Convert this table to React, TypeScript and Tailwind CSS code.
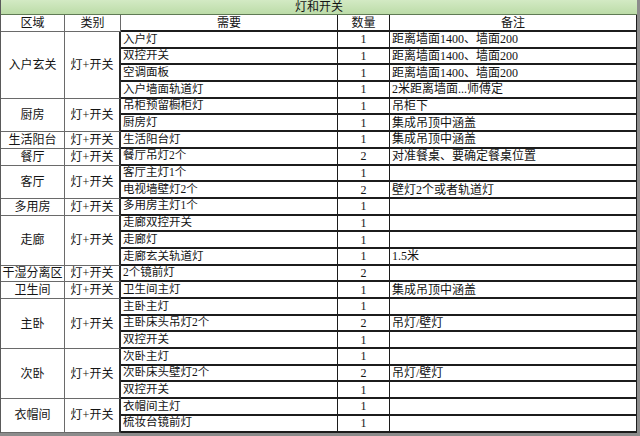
import React from "react";

type Item = { need: string; qty: number; note?: string };
type Group = { area: string; items: Item[] };

const wall = "距离墙面1400、墙面200";
const ceiling = "集成吊顶中涵盖";

const groups: Group[] = [
  {
    area: "入户玄关",
    items: [
      { need: "入户灯", qty: 1, note: wall },
      { need: "双控开关", qty: 1, note: wall },
      { need: "空调面板", qty: 1, note: wall },
      { need: "入户墙面轨道灯", qty: 1, note: "2米距离墙面...师傅定" },
    ],
  },
  {
    area: "厨房",
    items: [
      { need: "吊柜预留橱柜灯", qty: 1, note: "吊柜下" },
      { need: "厨房灯", qty: 1, note: ceiling },
    ],
  },
  { area: "生活阳台", items: [{ need: "生活阳台灯", qty: 1, note: ceiling }] },
  { area: "餐厅", items: [{ need: "餐厅吊灯2个", qty: 2, note: "对准餐桌、要确定餐桌位置" }] },
  {
    area: "客厅",
    items: [
      { need: "客厅主灯1个", qty: 1 },
      { need: "电视墙壁灯2个", qty: 2, note: "壁灯2个或者轨道灯" },
    ],
  },
  { area: "多用房", items: [{ need: "多用房主灯1个", qty: 1 }] },
  {
    area: "走廊",
    items: [
      { need: "走廊双控开关", qty: 1 },
      { need: "走廊灯", qty: 1 },
      { need: "走廊玄关轨道灯", qty: 1, note: "1.5米" },
    ],
  },
  { area: "干湿分离区", items: [{ need: "2个镜前灯", qty: 2 }] },
  { area: "卫生间", items: [{ need: "卫生间主灯", qty: 1, note: ceiling }] },
  {
    area: "主卧",
    items: [
      { need: "主卧主灯", qty: 1 },
      { need: "主卧床头吊灯2个", qty: 2, note: "吊灯/壁灯" },
      { need: "双控开关", qty: 1 },
    ],
  },
  {
    area: "次卧",
    items: [
      { need: "次卧主灯", qty: 1 },
      { need: "次卧床头壁灯2个", qty: 2, note: "吊灯/壁灯" },
      { need: "双控开关", qty: 1 },
    ],
  },
  {
    area: "衣帽间",
    items: [
      { need: "衣帽间主灯", qty: 1 },
      { need: "梳妆台镜前灯", qty: 1 },
    ],
  },
];

const spans: Record<number, string> = {
  1: "row-span-1",
  2: "row-span-2",
  3: "row-span-3",
  4: "row-span-4",
};

const font = { fontFamily: '"Liberation Serif", "Noto Sans CJK SC", serif' };

const leftCell = "flex items-center justify-center border-r border-b border-[#6a6a6a] text-[12px]";
const rightCell = "flex items-center border-r-[1.5px] border-b-2 border-[#1c1c1c]";

export default function App() {
  return (
    <div className="w-[640px] h-[436px] bg-[#8c8c8c] overflow-hidden" style={font}>
      <div className="w-[637px] h-[433px] bg-white border-l border-[#5a5a5a] text-[11.5px] leading-none text-[#141414]">
        <div className="grid grid-cols-[64px_56px_217px_52px_247px] grid-rows-[15px_17px_repeat(24,16.7px)]">
          <div className="col-span-5 flex items-center justify-center bg-gradient-to-b from-[#d3eac4] to-[#bcdca8] border-b border-[#5f7a54] text-[12px]">
            灯和开关
          </div>

          <div className={leftCell}>区域</div>
          <div className={leftCell}>类别</div>
          <div className={`${rightCell} justify-center text-[12px]`}>需要</div>
          <div className={`${rightCell} justify-center text-[12px]`}>数量</div>
          <div className={`${rightCell} justify-center text-[12px]`}>备注</div>

          {groups.map((g) => (
            <React.Fragment key={g.area}>
              <div className={`${leftCell} ${spans[g.items.length]}`}>{g.area}</div>
              <div className={`${leftCell} ${spans[g.items.length]} border-r-2 border-r-[#2a2a2a]`}>
                灯+开关
              </div>
              {g.items.map((it, i) => (
                <React.Fragment key={i}>
                  <div className={`${rightCell} pl-[2px]`}>{it.need}</div>
                  <div className={`${rightCell} justify-center text-[12px]`}>{it.qty}</div>
                  <div className={`${rightCell} pl-[2px] text-[12px]`}>{it.note ?? ""}</div>
                </React.Fragment>
              ))}
            </React.Fragment>
          ))}
        </div>
      </div>
    </div>
  );
}
